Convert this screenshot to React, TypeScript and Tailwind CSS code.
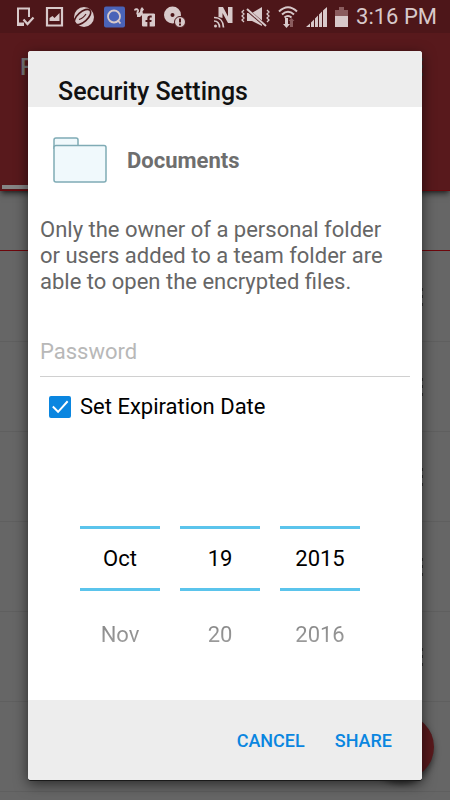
import React, { useState } from "react";
import { FaFacebookSquare } from "react-icons/fa";

const rows = ["row-1", "row-2", "row-3", "row-4", "row-5", "row-6"];

const pickers = [
  { label: "Month", value: "Oct", next: "Nov" },
  { label: "Day", value: "19", next: "20" },
  { label: "Year", value: "2015", next: "2016" },
];

function NotificationIcons() {
  return (
    <div className="flex items-center gap-[9px]">
      <svg width="20" height="22" viewBox="0 0 20 22" fill="none">
        <path d="M14 11V2.500H3V19h6" stroke="currentColor" strokeWidth="2" />
        <path d="M2 16.500h7V20H2z" fill="currentColor" />
        <path d="M8.500 13.500l4 4.500 6-6.500" stroke="currentColor" strokeWidth="2.200" />
      </svg>
      <svg width="20" height="22" viewBox="0 0 20 22" fill="none">
        <path d="M3 2h15v17.500H3z" stroke="currentColor" strokeWidth="2.200" />
        <path d="M5.500 15v-3l3-2 2 2 5-5v8z" fill="currentColor" />
      </svg>
      <svg width="21" height="22" viewBox="0 0 21 22" fill="none">
        <circle cx="11" cy="11" r="10" fill="currentColor" />
        <ellipse
          cx="9.500"
          cy="11"
          rx="10"
          ry="5"
          transform="rotate(-42 9.500 11)"
          stroke="#4d1619"
          strokeWidth="1.600"
        />
        <path d="M6 13.500q4-1 7-5.500" stroke="#4d1619" strokeWidth="1.200" />
      </svg>
      <svg width="22" height="22" viewBox="0 0 22 22" fill="none">
        <rect x="1" y="0.500" width="21" height="21" rx="2" fill="#4a63b8" />
        <circle cx="11" cy="10.500" r="6" stroke="currentColor" strokeWidth="1.800" />
        <path d="M14.500 14l3 3.500" stroke="currentColor" strokeWidth="1.800" />
      </svg>
      <svg width="21" height="22" viewBox="0 0 21 22" fill="none">
        <path
          d="M1 4.500c0-2 3.500-1.500 3 .5-.5 1.500-1.500 2.500 0 3.500"
          stroke="currentColor"
          strokeWidth="2"
        />
        <path d="M3 8l3-2 .5-3L8 1l2 2.500-1.500 2L9 8l-3 3H3z" fill="currentColor" />
        <FaFacebookSquare x="7" y="6.500" size={15} color="currentColor" />
      </svg>
      <svg width="22" height="22" viewBox="0 0 22 22" fill="none">
        <circle cx="8.500" cy="9" r="8.500" fill="currentColor" />
        <circle cx="8.500" cy="9" r="2" fill="#4d1619" />
        <circle cx="16" cy="16" r="5.500" fill="currentColor" stroke="#4d1619" />
        <path d="M16 12.500v4M16 17.500v2" stroke="#4d1619" strokeWidth="2" />
      </svg>
    </div>
  );
}

function SystemIcons() {
  return (
    <div className="flex items-center gap-2">
      <svg width="19" height="24" viewBox="0 0 19 24" fill="none">
        <path d="M4.500 12V2H9l5 9.500V2h4.500v16H14L8.500 8v5z" fill="currentColor" />
        <path
          d="M0 12.500c6 0 9.500 4 9.500 10M0 16c3.500 0 5.500 2.500 5.500 6.500"
          stroke="currentColor"
          strokeWidth="1.700"
        />
        <circle cx="1.500" cy="21" r="1.500" fill="currentColor" />
      </svg>
      <svg width="29" height="24" viewBox="0 0 29 24" fill="none">
        <path d="M6 8h5l10-6v19l-10-5H6z" fill="currentColor" />
        <path d="M4 3l21 18" stroke="#4d1619" strokeWidth="3" />
        <path d="M6 4l19 17" stroke="currentColor" strokeWidth="2" />
        <path
          d="M3 5L1 7l2 2-2 2 2 2-2 2 2 2M26 5l2 2-2 2 2 2-2 2 2 2-2 2"
          stroke="currentColor"
          strokeWidth="1.300"
        />
      </svg>
      <svg width="20" height="24" viewBox="0 0 20 24" fill="none">
        <path
          d="M1 6.500Q10-2 19 6.500M4 9.500Q10 4 16 9.500M6.500 12.500Q10 9.500 13.500 12.500"
          stroke="currentColor"
          strokeWidth="2"
        />
        <path d="M7 13h3v6h2l-3.500 4L5 19h2z" fill="currentColor" />
        <path d="M12 22v-6h-1.500l3-3 3 3H15v6z" fill="#8a5c5e" />
      </svg>
      <svg width="21" height="24" viewBox="0 0 21 24" fill="currentColor">
        <path d="M0 22l4-3.500V22zM5 17.500l3-3V22H5zM9 13.500l3-3V22H9zM13 9.500l3-3V22h-3zM17 5.500L21 2v20h-4z" />
      </svg>
      <svg width="13" height="24" viewBox="0 0 13 24">
        <path d="M4 2h5v3h4v6H0V5h4z" fill="#8a5c5e" />
        <path d="M0 11h13v11H0z" fill="currentColor" />
      </svg>
      <span className="text-[22px] leading-8">3:16 PM</span>
    </div>
  );
}

function MoreDots() {
  return (
    <svg width="4" height="20" viewBox="0 0 4 20" fill="#333333">
      <path d="M0 1h4v3H0zM0 8h4v3H0zM0 16h4v3H0z" />
    </svg>
  );
}

function FolderIcon() {
  return (
    <svg width="54" height="46" viewBox="0 0 54 46" fill="#f0f9fc" stroke="#7fabb5" strokeWidth="1.500">
      <path d="M1 12V3q0-2 2-2h20q2 0 2 2v8" />
      <rect x="1" y="8.500" width="52" height="36.500" rx="2" />
    </svg>
  );
}

function FileList() {
  return (
    <div className="relative col-start-1 row-start-1 bg-[#666666]">
      <header className="bg-[#58191c] border-b border-[#6d070c] shadow-md shadow-black/50">
        <div className="h-[33px] flex flex-row items-center justify-between pl-[15px] pr-[13px] bg-[#4d1619] text-[#d8c9ca]">
          <NotificationIcons />
          <SystemIcons />
        </div>
        <div className="h-[68px] flex flex-row items-center justify-between pl-5 pr-[27px]">
          <h1 className="text-2xl font-medium text-[#777777]">Files</h1>
          <MoreDots />
        </div>
        <div className="h-[89px] flex items-end pl-[2px] pb-px">
          <div className="h-1 w-1/3 bg-[#858585]" />
        </div>
      </header>
      <div className="h-[60px] border-b border-[#6d070c]" />
      <ul className="pt-px">
        {rows.map((row) => (
          <li
            key={row}
            className="h-[90px] flex items-center justify-end pr-[27px] border-b border-[#5f5f5f]"
          >
            <MoreDots />
          </li>
        ))}
      </ul>
      <button
        aria-label="Add"
        className="absolute bottom-5 right-4 size-[66px] rounded-full bg-[#58191c] shadow-[0_4px_6px_rgba(0,0,0,0.5)]"
      />
    </div>
  );
}

function DateColumn({ picker }: { picker: { label: string; value: string; next: string } }) {
  const { label, value, next } = picker;
  return (
    <div className="w-20 flex flex-col items-center text-[22px]">
      <input
        aria-label={label}
        defaultValue={value}
        className="w-full h-[65px] border-y-3 border-[#5bc4ec] text-center text-black outline-none"
      />
      <button className="h-[86px] bg-linear-to-b from-[#666666] to-[#c0c0c0] bg-clip-text text-transparent">
        {next}
      </button>
    </div>
  );
}

function SecurityDialog() {
  const [expires, setExpires] = useState(true);
  return (
    <div
      role="dialog"
      aria-labelledby="dialog-title"
      className="relative col-start-1 row-start-1 self-start mx-7 mt-[51px] mb-5 flex flex-col rounded-[3px] overflow-hidden bg-white shadow-[0_1px_0_#1a1a1a,0_4px_14px_rgba(0,0,0,0.6)]"
    >
      <div className="h-14 flex items-end px-[30px] bg-[#ededed]">
        <h2 id="dialog-title" className="text-[25px] leading-[30px] font-medium text-[#111111]">
          Security Settings
        </h2>
      </div>
      <div className="flex flex-col px-3 pt-[30px] pb-[23px]">
        <div className="flex flex-row items-center gap-5 pl-[13px]">
          <FolderIcon />
          <p className="text-[22px] font-bold text-[#6e6e6e]">Documents</p>
        </div>
        <p className="pt-[34px] text-[22px] leading-[26px] text-[#666666]">
          Only the owner of a personal folder
          <br />
          or users added to a team folder are
          <br />
          able to open the encrypted files.
        </p>
        <input
          type="password"
          aria-label="Password"
          placeholder="Password"
          className="mt-8 h-[50px] w-full border-b border-[#d0d0d0] text-[22px] placeholder:text-[#b8b8b8] outline-none"
        />
        <label className="mt-3 flex flex-row items-center gap-[9px] pl-[9px] text-[22px] leading-9 text-black">
          <span className="grid">
            <input
              type="checkbox"
              checked={expires}
              onChange={(e) => setExpires(e.target.checked)}
              className="col-start-1 row-start-1 size-[22px] appearance-none rounded-[2px] border-2 border-[#0a86e0] checked:bg-[#0a86e0]"
            />
            {expires && (
              <svg
                className="col-start-1 row-start-1 pointer-events-none"
                width="22"
                height="22"
                viewBox="0 0 23 23"
                fill="none"
              >
                <path d="M4 11l5.500 5.500L19.500 5.500" stroke="#ffffff" strokeWidth="2" />
              </svg>
            )}
          </span>
          Set Expiration Date
        </label>
        <div className="mt-[101px] mr-[10px] flex flex-row justify-center gap-5">
          {pickers.map((picker) => (
            <DateColumn key={picker.label} picker={picker} />
          ))}
        </div>
      </div>
      <div className="h-20 flex flex-row items-center justify-end gap-[30px] px-[30px] pt-[2px] bg-[#ededed] text-lg font-medium text-[#0a86e0]">
        <button>CANCEL</button>
        <button>SHARE</button>
      </div>
    </div>
  );
}

function App() {
  return (
    <main className="grid min-h-screen overflow-hidden bg-[#666666] font-['Roboto',sans-serif]">
      <FileList />
      <SecurityDialog />
    </main>
  );
}

export default App;
